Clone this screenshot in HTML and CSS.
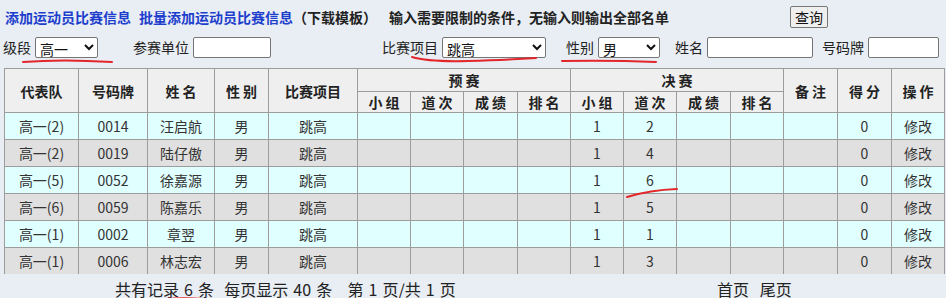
FILE: index.html
```html
<!DOCTYPE html>
<html lang="zh-CN">

<head>
    <meta charset="UTF-8">
    <meta name="viewport" content="width=device-width, initial-scale=1.0">
    <title>运动员比赛信息</title>
    <link rel="stylesheet" href="styles.css">
</head>

<body>
    <div class="page">
        <!-- 顶部操作 -->
        <div class="bar">
            <a class="link" href="#">添加运动员比赛信息</a>
            <span><a class="link" href="#">批量添加运动员比赛信息</a><span class="tpl">（下载模板）</span></span>
            <span class="hint">输入需要限制的条件，无输入则输出全部名单</span>
            <button class="btn" type="button">查询</button>
        </div>

        <!-- 查询条件 -->
        <div class="filters">
            <label class="field">级段 <select class="sel sel-grade"><option>高一</option></select></label>
            <label class="field">参赛单位 <input class="txt txt-unit" type="text"></label>
            <label class="field">比赛项目 <select class="sel sel-event"><option>跳高</option></select></label>
            <label class="field">性别 <select class="sel sel-sex"><option>男</option></select></label>
            <label class="field">姓名 <input class="txt txt-name" type="text"></label>
            <label class="field">号码牌 <input class="txt txt-no" type="text"></label>
        </div>

        <!-- 列表 -->
        <table class="grid">
            <colgroup>
                <col style="width:74px">
                <col style="width:69px">
                <col style="width:67px">
                <col style="width:54px">
                <col style="width:89px">
                <col style="width:53px">
                <col style="width:53px">
                <col style="width:54px">
                <col style="width:53px">
                <col style="width:53px">
                <col style="width:53px">
                <col style="width:54px">
                <col style="width:53px">
                <col style="width:54px">
                <col style="width:54px">
                <col style="width:53px">
            </colgroup>
            <thead>
                <tr class="head-1">
                    <th rowspan="2">代表队</th>
                    <th rowspan="2">号码牌</th>
                    <th rowspan="2">姓 名</th>
                    <th rowspan="2">性 别</th>
                    <th rowspan="2">比赛项目</th>
                    <th colspan="4">预 赛</th>
                    <th colspan="4">决 赛</th>
                    <th rowspan="2">备 注</th>
                    <th rowspan="2">得 分</th>
                    <th rowspan="2">操 作</th>
                </tr>
                <tr class="head-2">
                    <th>小 组</th>
                    <th>道 次</th>
                    <th>成 绩</th>
                    <th>排 名</th>
                    <th>小 组</th>
                    <th>道 次</th>
                    <th>成 绩</th>
                    <th>排 名</th>
                </tr>
            </thead>
            <tbody>
                <tr class="odd">
                    <td>高一(2)</td><td>0014</td><td>汪启航</td><td>男</td><td>跳高</td>
                    <td></td><td></td><td></td><td></td>
                    <td>1</td><td>2</td><td></td><td></td>
                    <td></td><td>0</td><td>修改</td>
                </tr>
                <tr class="even">
                    <td>高一(2)</td><td>0019</td><td>陆仔傲</td><td>男</td><td>跳高</td>
                    <td></td><td></td><td></td><td></td>
                    <td>1</td><td>4</td><td></td><td></td>
                    <td></td><td>0</td><td>修改</td>
                </tr>
                <tr class="odd">
                    <td>高一(5)</td><td>0052</td><td>徐嘉源</td><td>男</td><td>跳高</td>
                    <td></td><td></td><td></td><td></td>
                    <td>1</td><td>6</td><td></td><td></td>
                    <td></td><td>0</td><td>修改</td>
                </tr>
                <tr class="even">
                    <td>高一(6)</td><td>0059</td><td>陈嘉乐</td><td>男</td><td>跳高</td>
                    <td></td><td></td><td></td><td></td>
                    <td>1</td><td>5</td><td></td><td></td>
                    <td></td><td>0</td><td>修改</td>
                </tr>
                <tr class="odd">
                    <td>高一(1)</td><td>0002</td><td>章翌</td><td>男</td><td>跳高</td>
                    <td></td><td></td><td></td><td></td>
                    <td>1</td><td>1</td><td></td><td></td>
                    <td></td><td>0</td><td>修改</td>
                </tr>
                <tr class="even">
                    <td>高一(1)</td><td>0006</td><td>林志宏</td><td>男</td><td>跳高</td>
                    <td></td><td></td><td></td><td></td>
                    <td>1</td><td>3</td><td></td><td></td>
                    <td></td><td>0</td><td>修改</td>
                </tr>
            </tbody>
        </table>

        <!-- 分页 -->
        <div class="pager">
            <span class="pager-info">共有记录 6 条&nbsp; 每页显示 40 条&nbsp;&nbsp; 第 1 页/共 1 页</span>
            <span class="pager-nav">首页&nbsp;&nbsp; 尾页</span>
        </div>
    </div>

    <!-- 红色标注 -->
    <svg class="marks" width="951" height="303" viewBox="0 0 951 303">
        <path d="M23 62 Q62 59 112 62"/>
        <path d="M412 57 Q428 62 468 61 T536 58"/>
        <path d="M562 61 Q610 60 656 62"/>
        <path d="M627 197 Q650 190 677 189"/>
        <path d="M155 300 Q187 296 222 301"/>
    </svg>
</body>

</html>
```

FILE: styles.css
```css
* {
    margin: 0;
    padding: 0;
    box-sizing: border-box;
}

body {
    background: #fff;
    font-family: "Noto Sans CJK SC", "Liberation Sans", sans-serif;
    font-size: 14px;
    color: #222;
    position: relative;
}

.page {
    width: 946px;
    height: 298px;
    background: #e9eef4;
    padding-top: 4px;
}

/* 顶部操作 */
.bar {
    display: grid;
    grid-template-columns: 134px 250px 401px auto;
    align-items: center;
    height: 26px;
    padding-left: 5px;
    font-weight: bold;
}

.link {
    color: #1e3fcc;
    text-decoration: none;
}

.tpl {
    color: #222;
}

.btn {
    justify-self: start;
    width: 38px;
    height: 22px;
    font-family: inherit;
    font-size: 14px;
    font-weight: normal;
    color: #111;
    background: #efefef;
    border: 1px solid #767676;
    border-radius: 2px;
}

/* 查询条件 */
.filters {
    display: grid;
    grid-template-columns: 130px 249px 184px 109px 147px auto;
    align-items: center;
    height: 26px;
    margin-top: 4px;
    padding-left: 3px;
}

.field {
    display: flex;
    align-items: center;
    gap: 4px;
    white-space: nowrap;
}

.sel,
.txt {
    height: 21px;
    font-family: inherit;
    font-size: 14px;
    color: #111;
    background: #fff;
    border: 1px solid #767676;
    border-radius: 2px;
}

.sel-grade { width: 63px; }
.sel-event { width: 104px; }
.sel-sex { width: 62px; }
.txt-unit { width: 78px; }
.txt-name { width: 106px; }
.txt-no { width: 71px; }

/* 列表 */
.grid {
    margin: 8px 0 0 4px;
    width: 941px;
    table-layout: fixed;
    border-collapse: collapse;
    text-align: center;
}

.grid th,
.grid td {
    border: 1px solid #9c9c9c;
    padding: 0;
    overflow: hidden;
    white-space: nowrap;
}

.grid th {
    background: #efefef;
    color: #222;
    font-weight: bold;
}

.head-1 {
    height: 23px;
}

.head-2 {
    height: 21px;
}

.grid td {
    height: 27px;
    color: #333;
}

.grid .odd td {
    background: #e0ffff;
}

.grid .even td {
    background: #e0e0e0;
}

.grid tbody tr:last-child td {
    height: 26px;
    border-bottom: 0;
}

/* 分页 */
.pager {
    display: flex;
    height: 24px;
    line-height: 24px;
    padding: 3px 0 0 115px;
    font-size: 16px;
    word-spacing: 1.5px;
    color: #222;
}

.pager-info {
    width: 602px;
}

.pager-nav {
    word-spacing: 0;
}

/* 标注 */
.marks {
    position: absolute;
    left: 0;
    top: 0;
    pointer-events: none;
    fill: none;
    stroke: #e3262a;
    stroke-width: 2;
    stroke-linecap: round;
}
```
